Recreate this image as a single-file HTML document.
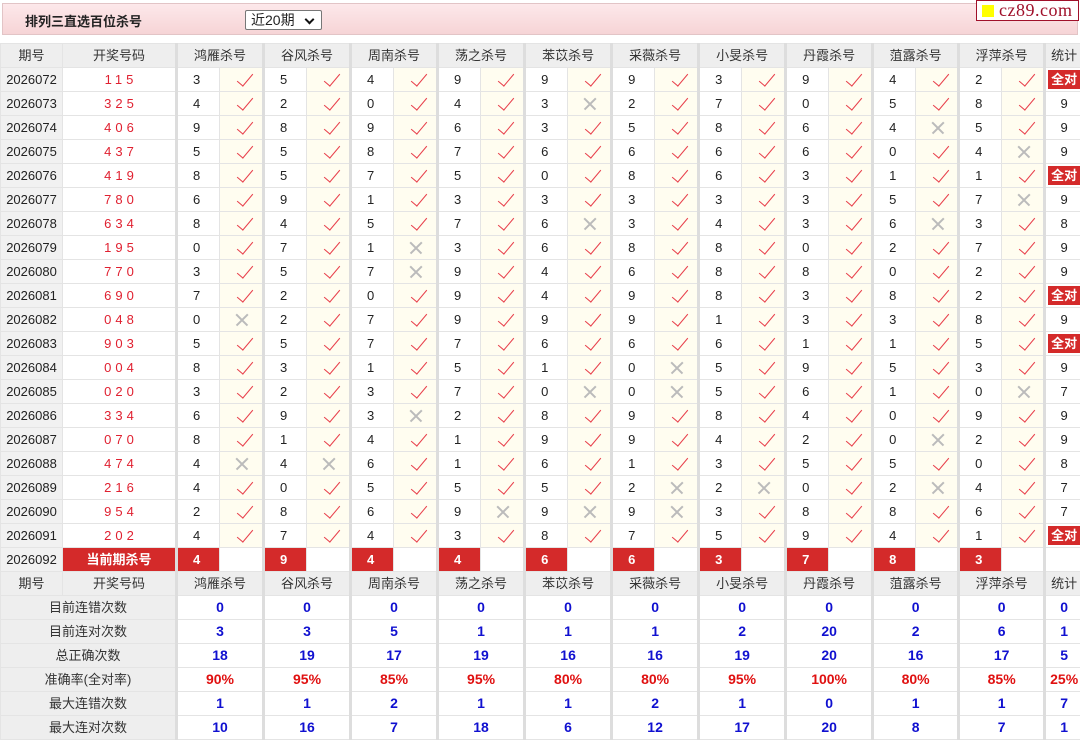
<!DOCTYPE html>
<html><head><meta charset="utf-8">
<style>
*{margin:0;padding:0;box-sizing:border-box}
body{width:1080px;height:739px;background:#fff;font-family:"Liberation Sans","Noto Sans CJK SC",sans-serif;font-size:13px;color:#222;position:relative;overflow:hidden}
.bar{position:absolute;left:2px;top:3px;width:1076px;height:32px;background:linear-gradient(#fde8ea,#f6d4d6);border:1px solid #e2c4c6}
.bar b{position:absolute;left:22px;top:7px;font-size:13px;color:#222}
.sel{position:absolute;left:242px;top:6px;width:77px;height:20px;border:1px solid #777;background:#fff;font-size:14px;padding-left:5px;line-height:18px;border-radius:2px}
.sel:after{content:"";position:absolute;right:8px;top:5px;width:5px;height:5px;border-right:2px solid #111;border-bottom:2px solid #111;transform:rotate(45deg)}
.logo{position:absolute;left:976px;top:0;width:103px;height:21px;border:1px solid #a0102a;background:#fff;font-family:"Liberation Serif",serif;font-size:18px;color:#a0102a;line-height:19px;padding-left:22px;letter-spacing:.5px}
.logo:before{content:"";position:absolute;left:5px;top:4px;width:12px;height:12px;background:#ff0}
table{position:absolute;left:0;top:43px;width:1080px;border-collapse:collapse;table-layout:fixed}
tr{height:24px}
td{height:23px;border:1px solid #e4e4e4;text-align:center;padding:0;line-height:21px;white-space:nowrap;position:relative;overflow:hidden}
tr.h td{background:#eee;color:#333}
td.p{background:#f1f1f1}
td.c{color:#e02030;letter-spacing:4px;padding-left:4px}
td.n{border-left:3px solid #ddd;text-align:left;padding-left:15px}
td.s{border-left:3px solid #ddd}
td.v,td.x{background:#fffdf0}
td.v:after{content:"";position:absolute;left:21px;top:2px;width:7px;height:15px;border-right:1.6px solid #e8404c;border-bottom:1.6px solid #e8404c;transform:rotate(40deg)}
td.x:before,td.x:after{content:"";position:absolute;left:14px;top:11px;width:16px;height:1.5px;background:#bbb;transform:rotate(45deg)}
td.x:after{transform:rotate(-45deg)}
td.a{padding:2px}
td.a span{display:block;background:#d42a2a;color:#fff;font-weight:bold;line-height:19px}
td.r{background:#d42a2a;color:#fff;font-weight:bold;text-align:left;padding-left:15px}
td.cur{background:#d42a2a;color:#fff;font-weight:bold}
td.lb{background:#eee;color:#333}
td.b{color:#1010d0;font-weight:bold;font-size:14px}
td.rd{color:#e01010;font-weight:bold;font-size:14px}
</style></head><body>
<div class="bar"><b>排列三直选百位杀号</b><div class="sel">近20期</div></div>
<div class="logo">cz89.com</div>
<table>
<colgroup><col style="width:62px"><col style="width:114px">
<col style="width:43px"><col style="width:44px"><col style="width:43px"><col style="width:44px"><col style="width:43px"><col style="width:44px"><col style="width:43px"><col style="width:44px"><col style="width:43px"><col style="width:44px"><col style="width:43px"><col style="width:44px"><col style="width:43px"><col style="width:44px"><col style="width:43px"><col style="width:44px"><col style="width:43px"><col style="width:43px"><col style="width:43px"><col style="width:43px">
<col style="width:38px"></colgroup>
<tr class="h"><td>期号</td><td>开奖号码</td><td class="s" colspan="2">鸿雁杀号</td><td class="s" colspan="2">谷风杀号</td><td class="s" colspan="2">周南杀号</td><td class="s" colspan="2">荡之杀号</td><td class="s" colspan="2">苯苡杀号</td><td class="s" colspan="2">采薇杀号</td><td class="s" colspan="2">小旻杀号</td><td class="s" colspan="2">丹霞杀号</td><td class="s" colspan="2">菹露杀号</td><td class="s" colspan="2">浮萍杀号</td><td class="s">统计</td></tr>
<tr><td class="p">2026072</td><td class="c">115</td><td class="n">3</td><td class="v"></td><td class="n">5</td><td class="v"></td><td class="n">4</td><td class="v"></td><td class="n">9</td><td class="v"></td><td class="n">9</td><td class="v"></td><td class="n">9</td><td class="v"></td><td class="n">3</td><td class="v"></td><td class="n">9</td><td class="v"></td><td class="n">4</td><td class="v"></td><td class="n">2</td><td class="v"></td><td class="s a"><span>全对</span></td></tr>
<tr><td class="p">2026073</td><td class="c">325</td><td class="n">4</td><td class="v"></td><td class="n">2</td><td class="v"></td><td class="n">0</td><td class="v"></td><td class="n">4</td><td class="v"></td><td class="n">3</td><td class="x"></td><td class="n">2</td><td class="v"></td><td class="n">7</td><td class="v"></td><td class="n">0</td><td class="v"></td><td class="n">5</td><td class="v"></td><td class="n">8</td><td class="v"></td><td class="s">9</td></tr>
<tr><td class="p">2026074</td><td class="c">406</td><td class="n">9</td><td class="v"></td><td class="n">8</td><td class="v"></td><td class="n">9</td><td class="v"></td><td class="n">6</td><td class="v"></td><td class="n">3</td><td class="v"></td><td class="n">5</td><td class="v"></td><td class="n">8</td><td class="v"></td><td class="n">6</td><td class="v"></td><td class="n">4</td><td class="x"></td><td class="n">5</td><td class="v"></td><td class="s">9</td></tr>
<tr><td class="p">2026075</td><td class="c">437</td><td class="n">5</td><td class="v"></td><td class="n">5</td><td class="v"></td><td class="n">8</td><td class="v"></td><td class="n">7</td><td class="v"></td><td class="n">6</td><td class="v"></td><td class="n">6</td><td class="v"></td><td class="n">6</td><td class="v"></td><td class="n">6</td><td class="v"></td><td class="n">0</td><td class="v"></td><td class="n">4</td><td class="x"></td><td class="s">9</td></tr>
<tr><td class="p">2026076</td><td class="c">419</td><td class="n">8</td><td class="v"></td><td class="n">5</td><td class="v"></td><td class="n">7</td><td class="v"></td><td class="n">5</td><td class="v"></td><td class="n">0</td><td class="v"></td><td class="n">8</td><td class="v"></td><td class="n">6</td><td class="v"></td><td class="n">3</td><td class="v"></td><td class="n">1</td><td class="v"></td><td class="n">1</td><td class="v"></td><td class="s a"><span>全对</span></td></tr>
<tr><td class="p">2026077</td><td class="c">780</td><td class="n">6</td><td class="v"></td><td class="n">9</td><td class="v"></td><td class="n">1</td><td class="v"></td><td class="n">3</td><td class="v"></td><td class="n">3</td><td class="v"></td><td class="n">3</td><td class="v"></td><td class="n">3</td><td class="v"></td><td class="n">3</td><td class="v"></td><td class="n">5</td><td class="v"></td><td class="n">7</td><td class="x"></td><td class="s">9</td></tr>
<tr><td class="p">2026078</td><td class="c">634</td><td class="n">8</td><td class="v"></td><td class="n">4</td><td class="v"></td><td class="n">5</td><td class="v"></td><td class="n">7</td><td class="v"></td><td class="n">6</td><td class="x"></td><td class="n">3</td><td class="v"></td><td class="n">4</td><td class="v"></td><td class="n">3</td><td class="v"></td><td class="n">6</td><td class="x"></td><td class="n">3</td><td class="v"></td><td class="s">8</td></tr>
<tr><td class="p">2026079</td><td class="c">195</td><td class="n">0</td><td class="v"></td><td class="n">7</td><td class="v"></td><td class="n">1</td><td class="x"></td><td class="n">3</td><td class="v"></td><td class="n">6</td><td class="v"></td><td class="n">8</td><td class="v"></td><td class="n">8</td><td class="v"></td><td class="n">0</td><td class="v"></td><td class="n">2</td><td class="v"></td><td class="n">7</td><td class="v"></td><td class="s">9</td></tr>
<tr><td class="p">2026080</td><td class="c">770</td><td class="n">3</td><td class="v"></td><td class="n">5</td><td class="v"></td><td class="n">7</td><td class="x"></td><td class="n">9</td><td class="v"></td><td class="n">4</td><td class="v"></td><td class="n">6</td><td class="v"></td><td class="n">8</td><td class="v"></td><td class="n">8</td><td class="v"></td><td class="n">0</td><td class="v"></td><td class="n">2</td><td class="v"></td><td class="s">9</td></tr>
<tr><td class="p">2026081</td><td class="c">690</td><td class="n">7</td><td class="v"></td><td class="n">2</td><td class="v"></td><td class="n">0</td><td class="v"></td><td class="n">9</td><td class="v"></td><td class="n">4</td><td class="v"></td><td class="n">9</td><td class="v"></td><td class="n">8</td><td class="v"></td><td class="n">3</td><td class="v"></td><td class="n">8</td><td class="v"></td><td class="n">2</td><td class="v"></td><td class="s a"><span>全对</span></td></tr>
<tr><td class="p">2026082</td><td class="c">048</td><td class="n">0</td><td class="x"></td><td class="n">2</td><td class="v"></td><td class="n">7</td><td class="v"></td><td class="n">9</td><td class="v"></td><td class="n">9</td><td class="v"></td><td class="n">9</td><td class="v"></td><td class="n">1</td><td class="v"></td><td class="n">3</td><td class="v"></td><td class="n">3</td><td class="v"></td><td class="n">8</td><td class="v"></td><td class="s">9</td></tr>
<tr><td class="p">2026083</td><td class="c">903</td><td class="n">5</td><td class="v"></td><td class="n">5</td><td class="v"></td><td class="n">7</td><td class="v"></td><td class="n">7</td><td class="v"></td><td class="n">6</td><td class="v"></td><td class="n">6</td><td class="v"></td><td class="n">6</td><td class="v"></td><td class="n">1</td><td class="v"></td><td class="n">1</td><td class="v"></td><td class="n">5</td><td class="v"></td><td class="s a"><span>全对</span></td></tr>
<tr><td class="p">2026084</td><td class="c">004</td><td class="n">8</td><td class="v"></td><td class="n">3</td><td class="v"></td><td class="n">1</td><td class="v"></td><td class="n">5</td><td class="v"></td><td class="n">1</td><td class="v"></td><td class="n">0</td><td class="x"></td><td class="n">5</td><td class="v"></td><td class="n">9</td><td class="v"></td><td class="n">5</td><td class="v"></td><td class="n">3</td><td class="v"></td><td class="s">9</td></tr>
<tr><td class="p">2026085</td><td class="c">020</td><td class="n">3</td><td class="v"></td><td class="n">2</td><td class="v"></td><td class="n">3</td><td class="v"></td><td class="n">7</td><td class="v"></td><td class="n">0</td><td class="x"></td><td class="n">0</td><td class="x"></td><td class="n">5</td><td class="v"></td><td class="n">6</td><td class="v"></td><td class="n">1</td><td class="v"></td><td class="n">0</td><td class="x"></td><td class="s">7</td></tr>
<tr><td class="p">2026086</td><td class="c">334</td><td class="n">6</td><td class="v"></td><td class="n">9</td><td class="v"></td><td class="n">3</td><td class="x"></td><td class="n">2</td><td class="v"></td><td class="n">8</td><td class="v"></td><td class="n">9</td><td class="v"></td><td class="n">8</td><td class="v"></td><td class="n">4</td><td class="v"></td><td class="n">0</td><td class="v"></td><td class="n">9</td><td class="v"></td><td class="s">9</td></tr>
<tr><td class="p">2026087</td><td class="c">070</td><td class="n">8</td><td class="v"></td><td class="n">1</td><td class="v"></td><td class="n">4</td><td class="v"></td><td class="n">1</td><td class="v"></td><td class="n">9</td><td class="v"></td><td class="n">9</td><td class="v"></td><td class="n">4</td><td class="v"></td><td class="n">2</td><td class="v"></td><td class="n">0</td><td class="x"></td><td class="n">2</td><td class="v"></td><td class="s">9</td></tr>
<tr><td class="p">2026088</td><td class="c">474</td><td class="n">4</td><td class="x"></td><td class="n">4</td><td class="x"></td><td class="n">6</td><td class="v"></td><td class="n">1</td><td class="v"></td><td class="n">6</td><td class="v"></td><td class="n">1</td><td class="v"></td><td class="n">3</td><td class="v"></td><td class="n">5</td><td class="v"></td><td class="n">5</td><td class="v"></td><td class="n">0</td><td class="v"></td><td class="s">8</td></tr>
<tr><td class="p">2026089</td><td class="c">216</td><td class="n">4</td><td class="v"></td><td class="n">0</td><td class="v"></td><td class="n">5</td><td class="v"></td><td class="n">5</td><td class="v"></td><td class="n">5</td><td class="v"></td><td class="n">2</td><td class="x"></td><td class="n">2</td><td class="x"></td><td class="n">0</td><td class="v"></td><td class="n">2</td><td class="x"></td><td class="n">4</td><td class="v"></td><td class="s">7</td></tr>
<tr><td class="p">2026090</td><td class="c">954</td><td class="n">2</td><td class="v"></td><td class="n">8</td><td class="v"></td><td class="n">6</td><td class="v"></td><td class="n">9</td><td class="x"></td><td class="n">9</td><td class="x"></td><td class="n">9</td><td class="x"></td><td class="n">3</td><td class="v"></td><td class="n">8</td><td class="v"></td><td class="n">8</td><td class="v"></td><td class="n">6</td><td class="v"></td><td class="s">7</td></tr>
<tr><td class="p">2026091</td><td class="c">202</td><td class="n">4</td><td class="v"></td><td class="n">7</td><td class="v"></td><td class="n">4</td><td class="v"></td><td class="n">3</td><td class="v"></td><td class="n">8</td><td class="v"></td><td class="n">7</td><td class="v"></td><td class="n">5</td><td class="v"></td><td class="n">9</td><td class="v"></td><td class="n">4</td><td class="v"></td><td class="n">1</td><td class="v"></td><td class="s a"><span>全对</span></td></tr>
<tr><td class="p">2026092</td><td class="cur">当前期杀号</td><td class="n r">4</td><td></td><td class="n r">9</td><td></td><td class="n r">4</td><td></td><td class="n r">4</td><td></td><td class="n r">6</td><td></td><td class="n r">6</td><td></td><td class="n r">3</td><td></td><td class="n r">7</td><td></td><td class="n r">8</td><td></td><td class="n r">3</td><td></td><td class="s"></td></tr>
<tr class="h"><td>期号</td><td>开奖号码</td><td class="s" colspan="2">鸿雁杀号</td><td class="s" colspan="2">谷风杀号</td><td class="s" colspan="2">周南杀号</td><td class="s" colspan="2">荡之杀号</td><td class="s" colspan="2">苯苡杀号</td><td class="s" colspan="2">采薇杀号</td><td class="s" colspan="2">小旻杀号</td><td class="s" colspan="2">丹霞杀号</td><td class="s" colspan="2">菹露杀号</td><td class="s" colspan="2">浮萍杀号</td><td class="s">统计</td></tr>
<tr><td class="lb" colspan="2">目前连错次数</td><td class="s b" colspan="2">0</td><td class="s b" colspan="2">0</td><td class="s b" colspan="2">0</td><td class="s b" colspan="2">0</td><td class="s b" colspan="2">0</td><td class="s b" colspan="2">0</td><td class="s b" colspan="2">0</td><td class="s b" colspan="2">0</td><td class="s b" colspan="2">0</td><td class="s b" colspan="2">0</td><td class="s b">0</td></tr>
<tr><td class="lb" colspan="2">目前连对次数</td><td class="s b" colspan="2">3</td><td class="s b" colspan="2">3</td><td class="s b" colspan="2">5</td><td class="s b" colspan="2">1</td><td class="s b" colspan="2">1</td><td class="s b" colspan="2">1</td><td class="s b" colspan="2">2</td><td class="s b" colspan="2">20</td><td class="s b" colspan="2">2</td><td class="s b" colspan="2">6</td><td class="s b">1</td></tr>
<tr><td class="lb" colspan="2">总正确次数</td><td class="s b" colspan="2">18</td><td class="s b" colspan="2">19</td><td class="s b" colspan="2">17</td><td class="s b" colspan="2">19</td><td class="s b" colspan="2">16</td><td class="s b" colspan="2">16</td><td class="s b" colspan="2">19</td><td class="s b" colspan="2">20</td><td class="s b" colspan="2">16</td><td class="s b" colspan="2">17</td><td class="s b">5</td></tr>
<tr><td class="lb" colspan="2">准确率(全对率)</td><td class="s rd" colspan="2">90%</td><td class="s rd" colspan="2">95%</td><td class="s rd" colspan="2">85%</td><td class="s rd" colspan="2">95%</td><td class="s rd" colspan="2">80%</td><td class="s rd" colspan="2">80%</td><td class="s rd" colspan="2">95%</td><td class="s rd" colspan="2">100%</td><td class="s rd" colspan="2">80%</td><td class="s rd" colspan="2">85%</td><td class="s rd">25%</td></tr>
<tr><td class="lb" colspan="2">最大连错次数</td><td class="s b" colspan="2">1</td><td class="s b" colspan="2">1</td><td class="s b" colspan="2">2</td><td class="s b" colspan="2">1</td><td class="s b" colspan="2">1</td><td class="s b" colspan="2">2</td><td class="s b" colspan="2">1</td><td class="s b" colspan="2">0</td><td class="s b" colspan="2">1</td><td class="s b" colspan="2">1</td><td class="s b">7</td></tr>
<tr><td class="lb" colspan="2">最大连对次数</td><td class="s b" colspan="2">10</td><td class="s b" colspan="2">16</td><td class="s b" colspan="2">7</td><td class="s b" colspan="2">18</td><td class="s b" colspan="2">6</td><td class="s b" colspan="2">12</td><td class="s b" colspan="2">17</td><td class="s b" colspan="2">20</td><td class="s b" colspan="2">8</td><td class="s b" colspan="2">7</td><td class="s b">1</td></tr>
</table>
</body></html>
